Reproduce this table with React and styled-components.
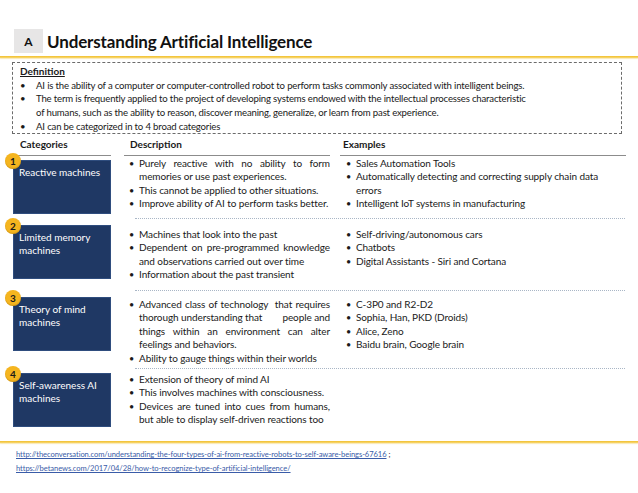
import React from "react";
import styled, { createGlobalStyle } from "styled-components";

const GlobalStyle = createGlobalStyle`
  html, body {
    margin: 0;
    padding: 0;
    background: #ffffff;
  }
  body {
    font-family: Lato, "Liberation Sans", sans-serif;
    color: #1a1a1a;
  }
`;

const Slide = styled.div`
  width: 638px;
  height: 493px;
  overflow: hidden;
  background: #ffffff;
  display: flex;
  flex-direction: column;
`;

const TitleBar = styled.div`
  display: flex;
  align-items: center;
  gap: 4px;
  padding: 29px 0 0 14px;
  height: 24px;
`;

const SectionBadge = styled.div`
  width: 29px;
  height: 24px;
  background: #e7e6e6;
  display: flex;
  align-items: center;
  justify-content: center;
  font-weight: 700;
  font-size: 12px;
  color: #111;
`;

const Title = styled.h1`
  margin: 0;
  font-size: 17px;
  font-weight: 700;
  color: #111;
  letter-spacing: -0.15px;
`;

const GoldRule = styled.div`
  height: 2px;
  margin-top: ${(p) => p.$top || 0}px;
  background: linear-gradient(to bottom, #f2bf2c, #f7d873);
  box-shadow: 0 1px 1px rgba(242, 191, 44, 0.35);
`;

const DefinitionBox = styled.section`
  margin: 4px 16px 0 12px;
  height: 72px;
  box-sizing: border-box;
  border: 1px dashed #6b6b6b;
  padding: 2px 7px 0 7px;
  font-size: 9.6px;
  letter-spacing: -0.17px;
  line-height: 13.7px;
`;

const DefTitle = styled.div`
  font-weight: 700;
  font-size: 10px;
  letter-spacing: 0;
  text-decoration: underline;
`;

const BulletList = styled.ul`
  margin: 0;
  padding: 0;
  list-style: none;
`;

const DefItem = styled.li`
  position: relative;
  padding-left: 16px;
  &::before {
    content: "•";
    position: absolute;
    left: 0;
  }
`;

const columns = "98px 219px 296px";

const Grid = styled.div`
  display: grid;
  grid-template-columns: ${columns};
  padding-left: 13px;
`;

const HeadCell = styled.div`
  margin-left: ${(p) => p.$gap || 0}px;
  padding: 4px 0 3px ${(p) => p.$pad}px;
  font-size: 10px;
  line-height: 13px;
  font-weight: 700;
  border-bottom: 1px solid #8c8c8c;
  height: 14px;
`;

const Row = styled.div`
  display: grid;
  grid-template-columns: ${columns};
  padding-left: 13px;
  height: ${(p) => p.$h}px;
  box-sizing: border-box;
  padding-top: ${(p) => p.$pad}px;
  align-items: start;
`;

const CategoryBox = styled.div`
  position: relative;
  margin-top: ${(p) => p.$top || 0}px;
  height: 54px;
  background: #1f3864;
  border: 1px solid #2f4d7e;
  box-sizing: border-box;
  color: #ffffff;
  font-size: 10px;
  line-height: 13px;
  padding: 5px 4px 0 5px;
`;

const NumberDot = styled.span`
  position: absolute;
  left: -9px;
  top: -8px;
  width: 16px;
  height: 16px;
  border-radius: 50%;
  background: #f5b51f;
  box-shadow: inset 0 -1px 1px rgba(160, 110, 0, 0.4);
  color: #1a1a1a;
  font-size: 10px;
  font-weight: 700;
  line-height: 16px;
  text-align: center;
`;

const TextCell = styled.ul`
  margin: ${(p) => p.$top || 0}px 0 0 ${(p) => p.$gap}px;
  padding: 0 ${(p) => p.$right || 0}px 0 0;
  list-style: none;
  font-size: 10px;
  letter-spacing: -0.1px;
  line-height: 13.4px;
  text-align: ${(p) => (p.$justify ? "justify" : "left")};
`;

const Item = styled.li`
  position: relative;
  padding-left: ${(p) => p.$text}px;
  margin-left: ${(p) => p.$indent}px;
  &::before {
    content: "•";
    position: absolute;
    left: 0;
    font-size: 9px;
  }
`;

const Separator = styled.div`
  margin-left: 135px;
  width: 490px;
  border-top: 1px dotted #a9b6c6;
`;

const Sources = styled.div`
  padding: 4px 0 0 16px;
  font-size: 7.6px;
  letter-spacing: -0.08px;
  line-height: 14px;
  color: #1a1a1a;
`;

const SourceLink = styled.a`
  color: #3a5ca8;
  text-decoration: underline;
`;

const rows = [
  {
    label: "Reactive machines",
    h: 62,
    pad: 1,
    box: 3,
    text: 0,
    desc: [
      "Purely reactive with no ability to form memories or use past experiences.",
      "This cannot be applied to other situations.",
      "Improve ability of AI to perform tasks better.",
    ],
    ex: [
      "Sales Automation Tools",
      "Automatically detecting and correcting supply chain data errors",
      "Intelligent IoT systems in manufacturing",
    ],
  },
  {
    label: "Limited memory machines",
    h: 71,
    pad: 6,
    box: 0,
    text: 3,
    desc: [
      "Machines that look into the past",
      "Dependent on pre-programmed knowledge and observations carried out over time",
      "Information about the past transient",
    ],
    ex: [
      "Self-driving/autonomous cars",
      "Chatbots",
      "Digital Assistants - Siri and Cortana",
    ],
  },
  {
    label: "Theory of mind machines",
    h: 77,
    pad: 6,
    box: 0,
    text: 1,
    desc: [
      "Advanced class of technology \u00a0that requires thorough understanding that \u00a0\u00a0\u00a0\u00a0\u00a0\u00a0 people and things within an environment can alter feelings and behaviors.",
      "Ability to gauge things within their worlds",
    ],
    ex: ["C-3P0 and R2-D2", "Sophia, Han, PKD (Droids)", "Alice, Zeno", "Baidu brain, Google brain"],
  },
  {
    label: "Self-awareness AI machines",
    h: 72,
    pad: 4,
    box: 0,
    text: 0,
    desc: [
      "Extension of theory of mind AI",
      "This involves machines with consciousness.",
      "Devices are tuned into cues from humans, but able to display self-driven reactions too",
    ],
    ex: [],
  },
];

export default function App() {
  return (
    <>
      <GlobalStyle />
      <Slide>
        <TitleBar>
          <SectionBadge>A</SectionBadge>
          <Title>Understanding Artificial Intelligence</Title>
        </TitleBar>
        <GoldRule $top={3} />

        <DefinitionBox>
          <DefTitle>Definition</DefTitle>
          <BulletList>
            <DefItem>
              AI is the ability of a computer or computer-controlled robot to perform tasks commonly
              associated with intelligent beings.
            </DefItem>
            <DefItem>
              The term is frequently applied to the project of developing systems endowed with the
              intellectual processes characteristic
              <br />
              of humans, such as the ability to reason, discover meaning, generalize, or learn from
              past experience.
            </DefItem>
            <DefItem>AI can be categorized in to 4 broad categories</DefItem>
          </BulletList>
        </DefinitionBox>

        <Grid>
          <HeadCell $pad={7}>Categories</HeadCell>
          <HeadCell $gap={13} $pad={6}>Description</HeadCell>
          <HeadCell $gap={10} $pad={3}>Examples</HeadCell>
        </Grid>

        {rows.map((r, i) => (
          <React.Fragment key={r.label}>
            {i > 0 && <Separator />}
            <Row $h={r.h} $pad={r.pad}>
              <CategoryBox $top={r.box}>
                <NumberDot>{i + 1}</NumberDot>
                {r.label}
              </CategoryBox>
              <TextCell $gap={13} $top={r.text} $justify>
                {r.desc.map((d) => (
                  <Item key={d} $indent={5} $text={10}>
                    {d}
                  </Item>
                ))}
              </TextCell>
              <TextCell $gap={10} $top={r.text} $right={14}>
                {r.ex.map((d) => (
                  <Item key={d} $indent={6} $text={10}>
                    {d}
                  </Item>
                ))}
              </TextCell>
            </Row>
          </React.Fragment>
        ))}

        <GoldRule />
        <Sources>
          <SourceLink href="#">
            http://theconversation.com/understanding-the-four-types-of-ai-from-reactive-robots-to-self-aware-beings-67616
          </SourceLink>{" "}
          ;
          <br />
          <SourceLink href="#">
            https://betanews.com/2017/04/28/how-to-recognize-type-of-artificial-intelligence/
          </SourceLink>
        </Sources>
      </Slide>
    </>
  );
}
